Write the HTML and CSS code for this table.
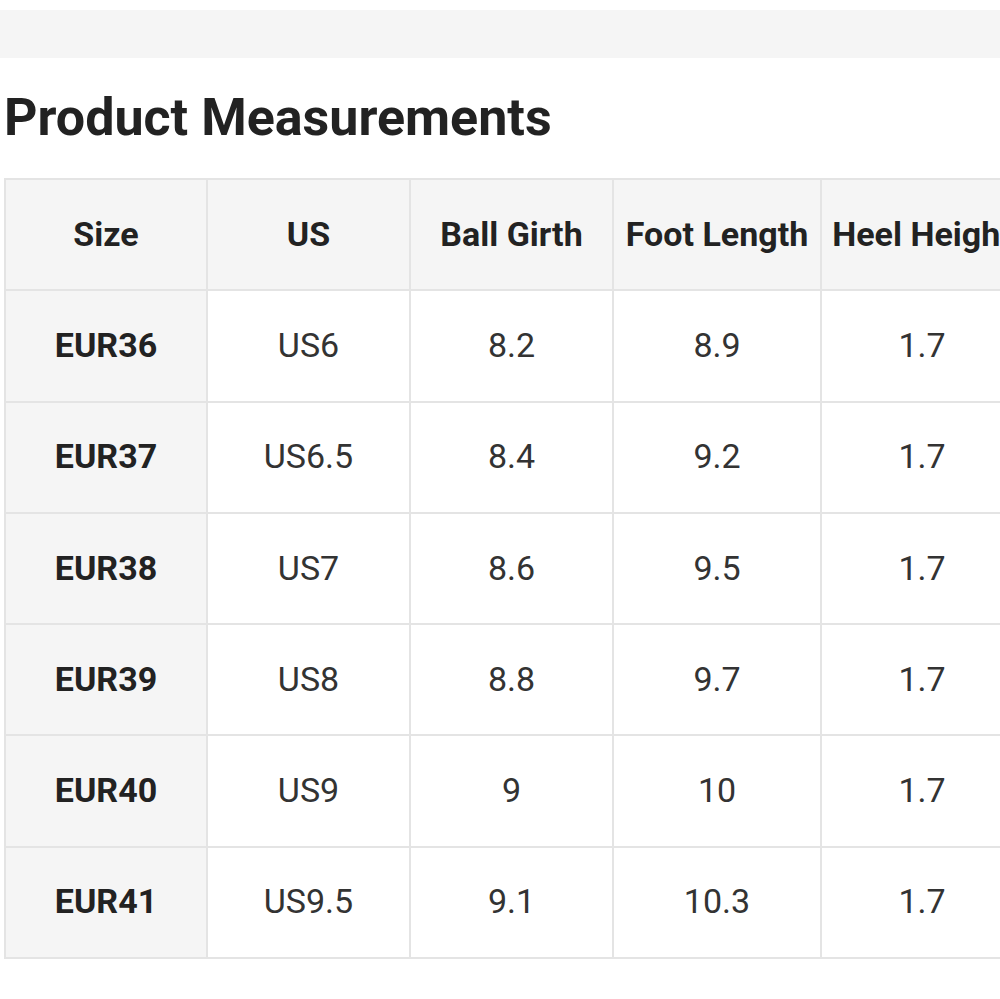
FILE: index.html
```html
<!DOCTYPE html>
<html>
<head>
<meta charset="utf-8">
<link rel="stylesheet" href="styles.css">
</head>
<body>
<div class="topbar"></div>
<h1 class="title">Product Measurements</h1>
<div class="table-wrap">
<table class="sizes">
<thead>
<tr><th class="c1">Size</th><th class="c2">US</th><th class="c3">Ball Girth</th><th class="c4">Foot Length</th><th class="c5">Heel Height</th></tr>
</thead>
<tbody>
<tr><th>EUR36</th><td>US6</td><td>8.2</td><td>8.9</td><td>1.7</td></tr>
<tr><th>EUR37</th><td>US6.5</td><td>8.4</td><td>9.2</td><td>1.7</td></tr>
<tr><th>EUR38</th><td>US7</td><td>8.6</td><td>9.5</td><td>1.7</td></tr>
<tr><th>EUR39</th><td>US8</td><td>8.8</td><td>9.7</td><td>1.7</td></tr>
<tr><th>EUR40</th><td>US9</td><td>9</td><td>10</td><td>1.7</td></tr>
<tr><th>EUR41</th><td>US9.5</td><td>9.1</td><td>10.3</td><td>1.7</td></tr>
</tbody>
</table>
</div>
</body>
</html>
```
FILE: styles.css
```css
html, body {
  margin: 0;
  padding: 0;
  background: #ffffff;
  overflow: hidden;
}
body {
  font-family: Roboto, "Liberation Sans", sans-serif;
  color: #222222;
  padding-top: 10px;
}
.topbar {
  height: 48px;
  background: #f5f5f5;
}
.title {
  margin: 0;
  padding: 32px 0 0 4px;
  font-size: 52px;
  line-height: 56px;
  font-weight: 700;
  color: #222222;
}
.table-wrap {
  padding: 32px 0 0 4px;
  width: 1100px;
}
.sizes {
  border-collapse: collapse;
  table-layout: fixed;
  border: 2px solid #e4e4e4;
}
.sizes th, .sizes td {
  border: 2px solid #e4e4e4;
  height: 107.3px;
  padding: 0 0 2px 0;
  text-align: center;
  vertical-align: middle;
  font-size: 34px;
  white-space: nowrap;
  overflow: hidden;
}
.sizes th {
  font-weight: 700;
  background: #f5f5f5;
}
.sizes td {
  font-weight: 400;
  color: #333333;
  background: #ffffff;
}
.c1 { width: 200px; }
.c2 { width: 201px; }
.c3 { width: 201px; }
.c4 { width: 206px; }
.c5 { width: 200px; }
```
